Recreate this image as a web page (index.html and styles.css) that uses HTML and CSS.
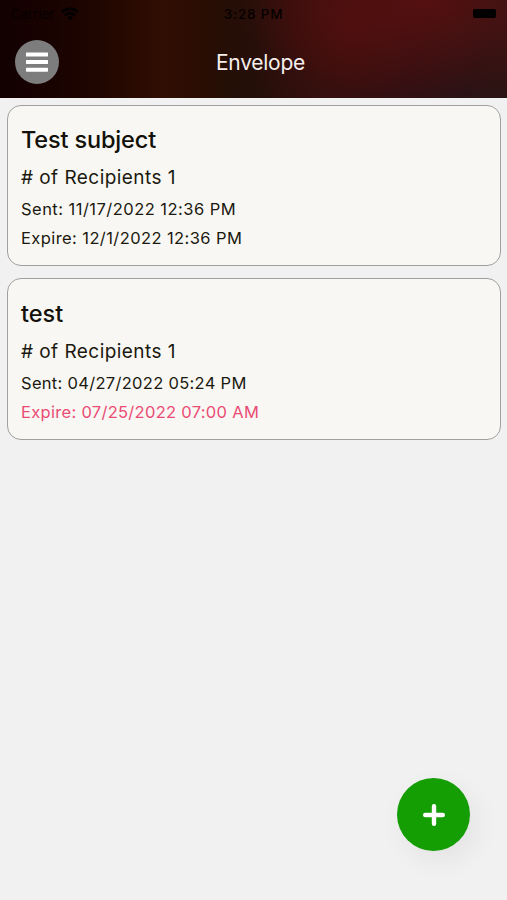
FILE: index.html
```html
<!DOCTYPE html>
<html lang="en">
<head>
<meta charset="utf-8">
<title>Envelope</title>
<link rel="stylesheet" href="styles.css">
</head>
<body>
<header class="header">
  <div class="status">
    <div class="carrier"><span>Carrier</span>
      <svg width="18" height="14" viewBox="0 0 18 14" fill="none" stroke="#000" stroke-width="2.6"><path d="M1 5a11.5 11.5 0 0 1 16 0M4 8.400a7 7 0 0 1 10 0"/><path d="M9 13.500L6 10.600a4.300 4.300 0 0 1 6 0z" fill="#000" stroke="none"/></svg>
    </div>
    <time class="clock">3:28 PM</time>
    <span class="battery"></span>
  </div>
  <div class="navbar">
    <button class="menu" aria-label="Menu"><svg width="22" height="20" viewBox="0 0 22 20" fill="#fff"><rect y=".5" width="22" height="4" rx=".6"/><rect y="8" width="22" height="4" rx=".6"/><rect y="15.700" width="22" height="4" rx=".6"/></svg></button>
    <h1 class="title"><span>Envelope</span></h1>
  </div>
</header>
<main class="list">
  <article class="card">
    <h2 class="subject"><span>Test subject</span></h2>
    <p class="recipients"><span># of Recipients 1</span></p>
    <p class="date wide"><span>Sent: 11/17/2022 12:36 PM</span></p>
    <p class="date wide-slight"><span>Expire: 12/1/2022 12:36 PM</span></p>
  </article>
  <article class="card">
    <h2 class="subject short"><span>test</span></h2>
    <p class="recipients"><span># of Recipients 1</span></p>
    <p class="date"><span>Sent: 04/27/2022 05:24 PM</span></p>
    <p class="date expired"><span>Expire: 07/25/2022 07:00 AM</span></p>
  </article>
</main>
<button class="add" aria-label="Add envelope"><svg width="22" height="22" viewBox="0 0 22 22" stroke="#fff" stroke-width="4.400" stroke-linecap="round"><path d="M11 2.200v17.600M2.200 11h17.600"/></svg></button>
</body>
</html>
```
FILE: styles.css
```css
* { box-sizing: border-box; }
body {
  margin: 0;
  height: 900px;
  overflow: hidden;
  background: #f1f1f1;
  color: #1b190f;
  font-family: Inter, "Liberation Sans", sans-serif;
}
h1, h2, p { margin: 0; font-weight: 400; }
button { border: 0; padding: 0; display: grid; place-items: center; border-radius: 50%; }
.header {
  height: 98px;
  background:
    radial-gradient(ellipse 190px 100px at 425px 0, rgba(92, 16, 16, .85), rgba(92, 16, 16, 0)),
    radial-gradient(ellipse 130px 140px at 350px 30px, rgba(74, 14, 12, .8), rgba(74, 14, 12, 0)),
    linear-gradient(90deg, #120001 0, #1e0500 18%, #300e02 32%, #2c0d03 38%, #1e0f08 50%, #28100f 65%, #241015 80%, #2c1413 100%);
}
.status {
  height: 27px;
  display: grid;
  grid-template-columns: 1fr auto 1fr;
  align-items: center;
  padding: 0 11px;
  color: #050000;
  font-size: 13px;
}
.carrier { display: flex; align-items: center; gap: 7px; letter-spacing: .1px; }
.clock { font-size: 13.500px; font-weight: 500; letter-spacing: .8px; }
.battery { justify-self: end; width: 23px; height: 9px; border-radius: 2px; background: #000; }
.navbar { height: 71px; display: grid; grid-template-columns: 44px 1fr 44px; padding: 13px 15px 0; }
.menu { width: 44px; height: 44px; background: #7d7d7d; }
.title { font-size: 21px; letter-spacing: -.25px; line-height: 45px; text-align: center; color: #f6eeec; padding-left: 14px; }
.list { display: grid; gap: 12px; padding: 6.500px 6px 0 7px; }
.card {
  height: 161.500px;
  padding: 19px 13px 0;
  border: 1.500px solid #a0a09e;
  border-radius: 14px;
  background: #f8f7f3;
}
.subject { height: 34px; line-height: 30px; font-size: 23.500px; letter-spacing: -.15px; font-weight: 500; color: #121008; }
.short { letter-spacing: 0; }
.recipients { height: 35px; line-height: 38px; font-size: 19px; letter-spacing: .45px; }
.date { height: 29.300px; line-height: 31px; font-size: 16.500px; letter-spacing: .3px; }
.wide { letter-spacing: .47px; }
.wide-slight { letter-spacing: .41px; }
.card + .card { padding-top: 19.500px; }
.expired { color: #ea4c75; }
.add {
  position: absolute;
  left: 397px;
  top: 778px;
  width: 73px;
  height: 73px;
  background: #159d04;
  box-shadow: 7px 10px 28px rgba(0, 0, 0, .06);
}
```
